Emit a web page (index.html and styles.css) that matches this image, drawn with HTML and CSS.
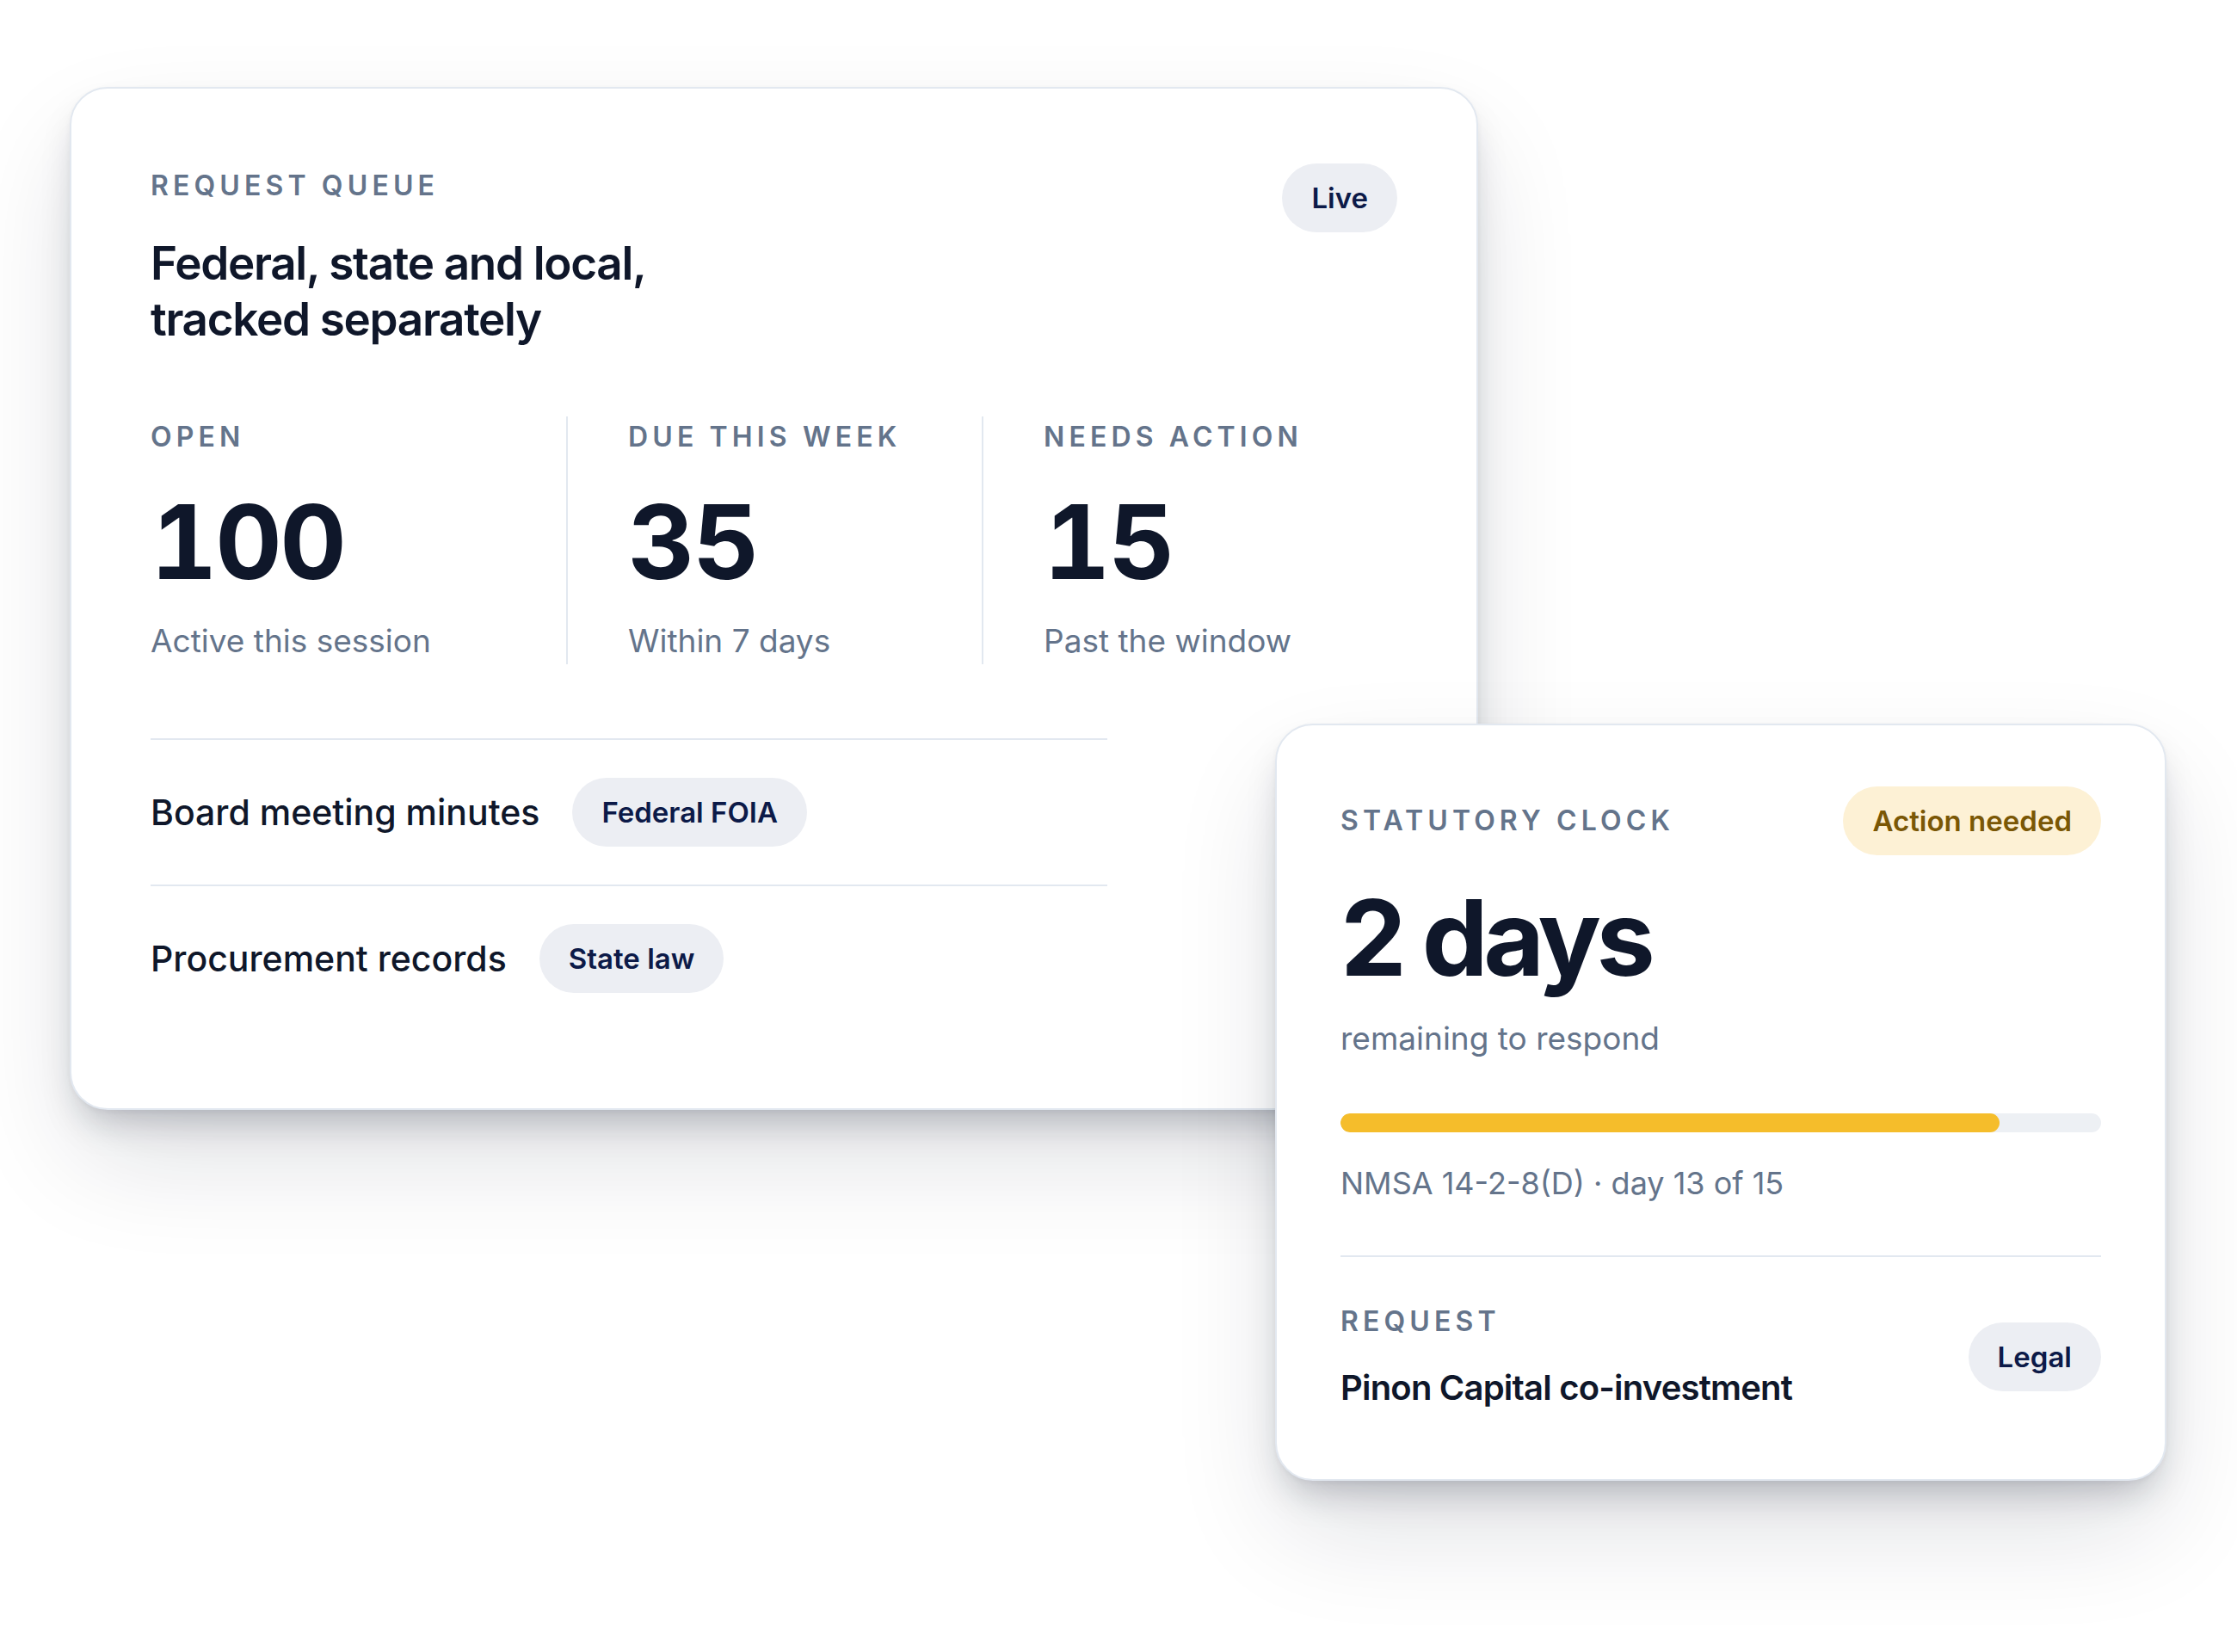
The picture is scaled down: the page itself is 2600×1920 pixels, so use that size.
FILE: index.html
```html
<!DOCTYPE html>
<html lang="en">
<head>
<meta charset="UTF-8" />
<meta name="viewport" content="width=device-width, initial-scale=1" />
<title>Request Queue</title>
<link rel="stylesheet" href="styles.css">
</head>
<body>

<main class="stage">

  <section class="card queue">
    <div class="card-head">
      <div>
        <p class="eyebrow">Request queue</p>
        <h2 class="queue-title">Federal, state and local,<br>tracked separately</h2>
      </div>
      <span class="pill">Live</span>
    </div>

    <div class="stats">
      <div class="stat">
        <p class="eyebrow">Open</p>
        <p class="stat-num">100</p>
        <p class="stat-note">Active this session</p>
      </div>
      <div class="stat">
        <p class="eyebrow">Due this week</p>
        <p class="stat-num">35</p>
        <p class="stat-note">Within 7 days</p>
      </div>
      <div class="stat">
        <p class="eyebrow">Needs action</p>
        <p class="stat-num">15</p>
        <p class="stat-note">Past the window</p>
      </div>
    </div>

    <ul class="req-list">
      <li class="req-row">
        <span class="req-name">Board meeting minutes</span>
        <span class="pill">Federal FOIA</span>
      </li>
      <li class="req-row">
        <span class="req-name">Procurement records</span>
        <span class="pill">State law</span>
      </li>
    </ul>
  </section>

  <section class="card clock">
    <div class="clock-head">
      <p class="eyebrow">Statutory clock</p>
      <span class="pill pill-warn">Action needed</span>
    </div>

    <p class="clock-num">2 days</p>
    <p class="clock-note">remaining to respond</p>

    <div class="progress">
      <div class="progress-fill" style="width: 86.67%"></div>
    </div>
    <p class="clock-meta">NMSA 14-2-8(D) · day 13 of 15</p>

    <div class="clock-req">
      <div>
        <p class="eyebrow">Request</p>
        <p class="req-title">Pinon Capital co-investment</p>
      </div>
      <span class="pill">Legal</span>
    </div>
  </section>

</main>

</body>
</html>
```

FILE: styles.css
```css
* {
  box-sizing: border-box;
}
body {
  margin: 0;
  background: #fff;
  color: #0f172a;
  font-family: Inter, "Noto Sans", sans-serif;
}
p, h2, ul {
  margin: 0;
  padding: 0;
}

/* two cards that overlap on one grid */
.stage {
  display: grid;
  grid-template-columns: 1401px 236px 800px;
  grid-template-rows: 740px 447px auto;
  min-height: 100vh;
  padding: 101px 0 0 81px;
}
.card {
  background: #fff;
  border: 2px solid #e2e8f0;
  border-radius: 44px;
  box-shadow:
    0 2px 6px rgba(15, 23, 42, 0.04),
    0 24px 44px -14px rgba(15, 23, 42, 0.26),
    0 60px 130px -10px rgba(15, 23, 42, 0.14);
  align-self: start;
}
.queue {
  grid-column: 1 / 3;
  grid-row: 1 / 3;
  padding: 92px 92px 90px;
}
.clock {
  grid-column: 2 / 4;
  grid-row: 2 / 4;
  padding: 71px 74px 78px;
}

.eyebrow {
  font-size: 32px;
  line-height: 48px;
  font-weight: 600;
  letter-spacing: 0.16em;
  text-transform: uppercase;
  color: #64748b;
}
.pill {
  display: inline-flex;
  align-items: center;
  height: 80px;
  padding: 0 34px;
  border-radius: 40px;
  background: #eceef3;
  color: #0c1a48;
  font-size: 33px;
  font-weight: 600;
  white-space: nowrap;
}
.pill-warn {
  background: #fdf1d5;
  color: #7a5705;
}

/* queue card */
.card-head {
  display: flex;
  justify-content: space-between;
  align-items: flex-start;
}
.card-head .eyebrow {
  line-height: 38px;
  margin-top: 2px;
}
.card-head .pill {
  margin-top: -5px;
}
.queue-title {
  margin-top: 39px;
  font-size: 53px;
  line-height: 65px;
  font-weight: 600;
  letter-spacing: -0.025em;
}
.stats {
  display: grid;
  grid-template-columns: repeat(3, 1fr);
  margin-top: 80px;
}
.stat + .stat {
  border-left: 2px solid #e2e8f0;
  padding-left: 70px;
}
.stat-num {
  margin-top: 38px;
  font-size: 120px;
  line-height: 120px;
  font-weight: 700;
  letter-spacing: -0.02em;
  font-variant-numeric: tabular-nums;
}
.stat-note {
  margin-top: 28px;
  font-size: 37px;
  line-height: 54px;
  color: #64748b;
}
.req-list {
  list-style: none;
  width: 1112px;
  margin-top: 86px;
}
.req-row {
  display: flex;
  align-items: center;
  gap: 38px;
  padding: 44px 0;
  border-top: 2px solid #e2e8f0;
}
.req-name {
  font-size: 41px;
  font-weight: 500;
}

/* clock card */
.clock-head {
  display: flex;
  justify-content: space-between;
  align-items: center;
}
.clock-num {
  margin-top: 36px;
  font-size: 122px;
  line-height: 120px;
  font-weight: 700;
  letter-spacing: -0.045em;
}
.clock-note {
  margin-top: 32px;
  font-size: 37px;
  line-height: 50px;
  color: #64748b;
}
.progress {
  height: 22px;
  margin-top: 62px;
  border-radius: 11px;
  background: #edf0f4;
  overflow: hidden;
}
.progress-fill {
  height: 100%;
  border-radius: 11px;
  background: #f5bd2b;
}
.clock-meta {
  margin-top: 36px;
  font-size: 36px;
  line-height: 46px;
  color: #64748b;
}
.clock-req {
  display: flex;
  justify-content: space-between;
  align-items: center;
  margin-top: 61px;
  padding-top: 51px;
  border-top: 2px solid #e2e8f0;
}
.req-title {
  margin-top: 25px;
  font-size: 40px;
  line-height: 56px;
  font-weight: 600;
  letter-spacing: -0.02em;
}
```
